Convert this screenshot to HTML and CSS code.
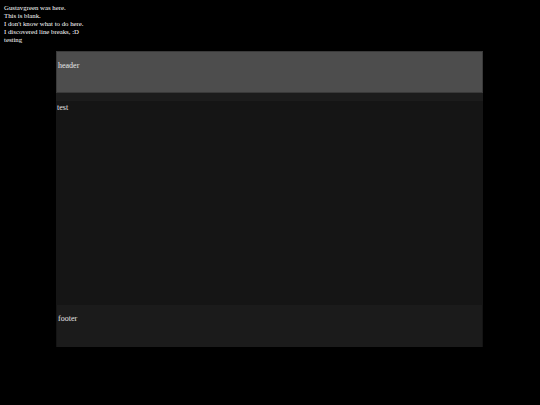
FILE: index.html
```html
<!DOCTYPE html>
<html>
<head>
<meta charset="utf-8">
<link rel="stylesheet" href="styles.css">
</head>
<body>
<div class="intro">
Gustavgreen was here.<br>
This is blank.<br>
I don't know what to do here.<br>
I discovered line breaks, :D<br>
testing
</div>
<div class="page">
  <div class="header">header</div>
  <div class="band"></div>
  <div class="main">test</div>
  <div class="footer">footer</div>
</div>
</body>
</html>
```

FILE: styles.css
```css
html, body {
  margin: 0;
  padding: 0;
  background: #000;
}
body {
  color: #fff;
  font-family: "Liberation Serif", "Times New Roman", serif;
  width: 540px;
  height: 405px;
  overflow: hidden;
}
.intro {
  padding: 4px 4px 0 4px;
  font-size: 6.8px;
  line-height: 8px;
  height: 43px;
}
.page {
  margin: 4px 0 0 56px;
  width: 427px;
  display: flex;
  flex-direction: column;
  background: #1b1b1b;
  font-size: 8px;
  line-height: 9px;
  color: #e6e6e6;
}
.header {
  background: #4d4d4d;
  border: 1px solid #3a3a3a;
  padding: 9px 0 0 1px;
  box-sizing: border-box;
  height: 42px;
}
.band {
  height: 8px;
  background: #1c1c1c;
}
.main {
  height: 204px;
  background: #151515;
  padding: 2px 0 0 1px;
  box-sizing: border-box;
}
.footer {
  height: 42px;
  background: #1b1b1b;
  padding: 9px 0 0 1px;
  box-sizing: border-box;
  border-left: 1px solid #141414;
  border-right: 1px solid #141414;
}
```
